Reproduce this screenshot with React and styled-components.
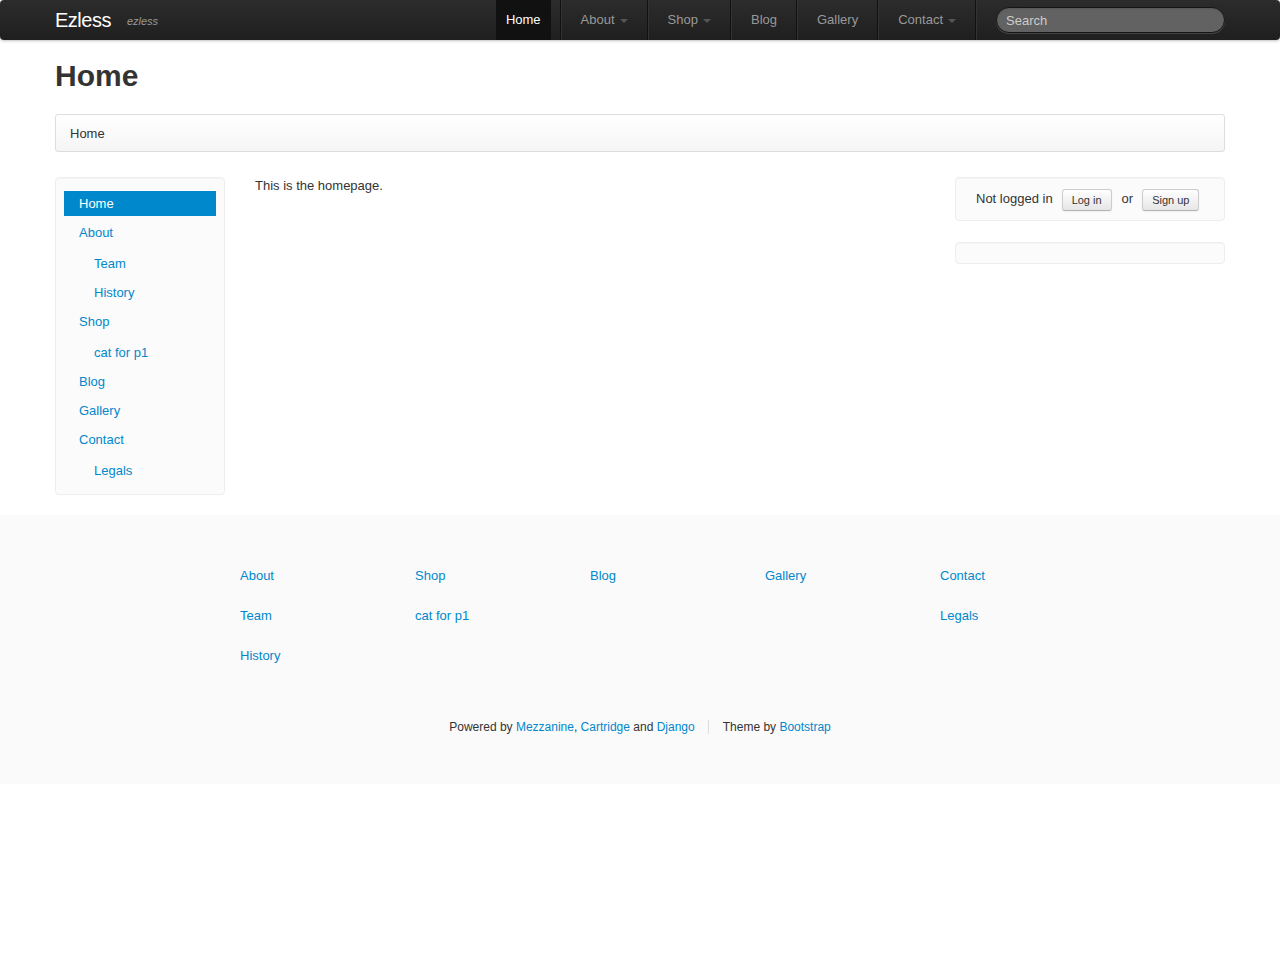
import React from "react";
import styled, { createGlobalStyle } from "styled-components";

const GlobalStyle = createGlobalStyle`
  body {
    margin: 0;
    background: #fff;
    font-family: "Liberation Sans", Arial, sans-serif;
    font-size: 13px;
    line-height: 18px;
    color: #333;
  }
  a {
    color: #0088cc;
    text-decoration: none;
  }
`;

const Navbar = styled.div`
  height: 40px;
  background: linear-gradient(#2c2c2c, #1f1f1f);
  border-radius: 4px;
  box-shadow: 0 1px 3px rgba(0, 0, 0, 0.25);
`;

const Container = styled.div`
  width: 1170px;
  margin: 0 auto;
`;

const NavInner = styled(Container)`
  display: flex;
  align-items: center;
  height: 40px;
`;

const Brand = styled.a`
  color: #fff;
  font-size: 20px;
  letter-spacing: -0.5px;
  line-height: 40px;
`;

const Tagline = styled.span`
  color: #999;
  font-size: 11px;
  font-style: italic;
  margin-left: 16px;
  margin-top: 2px;
`;

const Nav = styled.ul`
  display: flex;
  list-style: none;
  margin: 0 0 0 auto;
  padding: 0;
  height: 40px;
`;

const NavItem = styled.li`
  display: flex;
  align-items: center;
  padding: 0 10px;
  height: 40px;
  font-size: 13px;
  color: ${(p) => (p.$active ? "#fff" : "#999")};
  background: ${(p) => (p.$active ? "#111" : "transparent")};
`;

const Caret = styled.span`
  display: inline-block;
  margin-left: 5px;
  margin-top: 2px;
  border-top: 4px solid #555;
  border-left: 4px solid transparent;
  border-right: 4px solid transparent;
`;

const Divider = styled.li`
  width: 1px;
  height: 40px;
  margin: 0 9px;
  background: #111;
  border-right: 1px solid #333;
`;

const Search = styled.input`
  width: 206px;
  height: 24px;
  margin-left: 10px;
  padding: 0 12px 0 9px;
  border: 1px solid #151515;
  border-radius: 14px;
  background: #626262;
  box-shadow: inset 0 1px 2px rgba(0, 0, 0, 0.1), 0 1px 0 rgba(255, 255, 255, 0.15);
  color: #ccc;
  font-family: inherit;
  font-size: 13px;
  outline: none;
  &::placeholder {
    color: #ccc;
  }
`;

const Title = styled.h1`
  margin: 18px 0 20px;
  font-size: 30px;
  line-height: 36px;
  font-weight: bold;
  color: #333;
`;

const Breadcrumb = styled.div`
  height: 38px;
  box-sizing: border-box;
  padding: 10px 14px;
  border: 1px solid #ddd;
  border-radius: 3px;
  background: linear-gradient(#fff, #f5f5f5);
  box-shadow: inset 0 1px 0 #fff;
  font-size: 13px;
  color: #333;
`;

const Main = styled.div`
  display: grid;
  grid-template-columns: 170px 670px 270px;
  gap: 30px;
  margin-top: 25px;
`;

const Well = styled.div`
  background: #fbfbfb;
  border: 1px solid #eee;
  border-radius: 4px;
  box-shadow: inset 0 1px 1px rgba(0, 0, 0, 0.03);
`;

const SideWell = styled(Well)`
  padding: 13px 8px 7px;
  align-self: start;
`;

const SideList = styled.ul`
  list-style: none;
  margin: 0;
  padding: ${(p) => (p.$nested ? "2px 0 0" : "0")};
`;

const SideLink = styled.a`
  display: block;
  line-height: 19px;
  padding: 3px 15px 3px ${(p) => (p.$nested ? "30px" : "15px")};
  margin-bottom: 4px;
  font-size: 13px;
  color: ${(p) => (p.$active ? "#fff" : "#0088cc")};
  background: ${(p) => (p.$active ? "#0088cc" : "transparent")};
`;

const Content = styled.p`
  margin: 0;
  font-size: 13px;
`;

const Aside = styled.div`
  display: flex;
  flex-direction: column;
  gap: 21px;
`;

const LoginWell = styled(Well)`
  height: 44px;
  box-sizing: border-box;
  display: flex;
  align-items: center;
  padding: 0 20px;
  font-size: 13px;
  white-space: nowrap;
`;

const SmallButton = styled.a`
  display: inline-block;
  margin: 2px 10px 0 9px;
  padding: 3px 9px 3px;
  font-size: 11px;
  line-height: 14px;
  color: #333;
  border: 1px solid #ccc;
  border-bottom-color: #b3b3b3;
  border-radius: 3px;
  background: linear-gradient(#fff, #e6e6e6);
  box-shadow: inset 0 1px 0 rgba(255, 255, 255, 0.2), 0 1px 2px rgba(0, 0, 0, 0.05);
`;

const EmptyWell = styled(Well)`
  height: 22px;
  box-sizing: border-box;
`;

const Footer = styled.footer`
  margin-top: 20px;
  background: #fafafa;
  padding: 52px 0 48px;
`;

const FooterGrid = styled.div`
  display: grid;
  grid-template-columns: repeat(5, 175px);
  padding-left: 185px;
`;

const FooterList = styled.ul`
  list-style: none;
  margin: 0;
  padding: 0;
`;

const FooterLink = styled.a`
  display: block;
  line-height: 18px;
  height: 40px;
  font-size: 13px;
`;

const Credits = styled.div`
  display: flex;
  justify-content: center;
  align-items: center;
  margin-top: 31px;
  font-size: 12px;
  color: #333;
`;

const Sep = styled.span`
  width: 1px;
  height: 14px;
  background: #ddd;
  margin: 0 14px 0 13px;
`;

const sideItems = [
  { label: "Home", active: true },
  { label: "About", children: ["Team", "History"] },
  { label: "Shop", children: ["cat for p1"] },
  { label: "Blog" },
  { label: "Gallery" },
  { label: "Contact", children: ["Legals"] },
];

const footerCols = [
  ["About", "Team", "History"],
  ["Shop", "cat for p1"],
  ["Blog"],
  ["Gallery"],
  ["Contact", "Legals"],
];

const topNav = [
  { label: "Home", active: true },
  { label: "About", caret: true },
  { label: "Shop", caret: true },
  { label: "Blog" },
  { label: "Gallery" },
  { label: "Contact", caret: true },
];

export default function App() {
  return (
    <>
      <GlobalStyle />
      <Navbar>
        <NavInner>
          <Brand href="#">Ezless</Brand>
          <Tagline>ezless</Tagline>
          <Nav>
            {topNav.map((item) => (
              <React.Fragment key={item.label}>
                <NavItem $active={item.active}>
                  {item.label}
                  {item.caret && <Caret />}
                </NavItem>
                <Divider />
              </React.Fragment>
            ))}
          </Nav>
          <Search placeholder="Search" />
        </NavInner>
      </Navbar>

      <Container>
        <Title>Home</Title>
        <Breadcrumb>Home</Breadcrumb>

        <Main>
          <SideWell>
            <SideList>
              {sideItems.map((item) => (
                <li key={item.label}>
                  <SideLink href="#" $active={item.active}>
                    {item.label}
                  </SideLink>
                  {item.children && (
                    <SideList $nested>
                      {item.children.map((c) => (
                        <li key={c}>
                          <SideLink href="#" $nested>
                            {c}
                          </SideLink>
                        </li>
                      ))}
                    </SideList>
                  )}
                </li>
              ))}
            </SideList>
          </SideWell>

          <Content>This is the homepage.</Content>

          <Aside>
            <LoginWell>
              Not logged in
              <SmallButton href="#">Log in</SmallButton>
              or
              <SmallButton href="#">Sign up</SmallButton>
            </LoginWell>
            <EmptyWell />
          </Aside>
        </Main>
      </Container>

      <Footer>
        <Container>
          <FooterGrid>
            {footerCols.map((col) => (
              <FooterList key={col[0]}>
                {col.map((l) => (
                  <li key={l}>
                    <FooterLink href="#">{l}</FooterLink>
                  </li>
                ))}
              </FooterList>
            ))}
          </FooterGrid>
          <Credits>
            <span>
              Powered by <a href="#">Mezzanine</a>, <a href="#">Cartridge</a>{" "}
              and <a href="#">Django</a>
            </span>
            <Sep />
            <span>
              Theme by <a href="#">Bootstrap</a>
            </span>
          </Credits>
        </Container>
      </Footer>
    </>
  );
}
